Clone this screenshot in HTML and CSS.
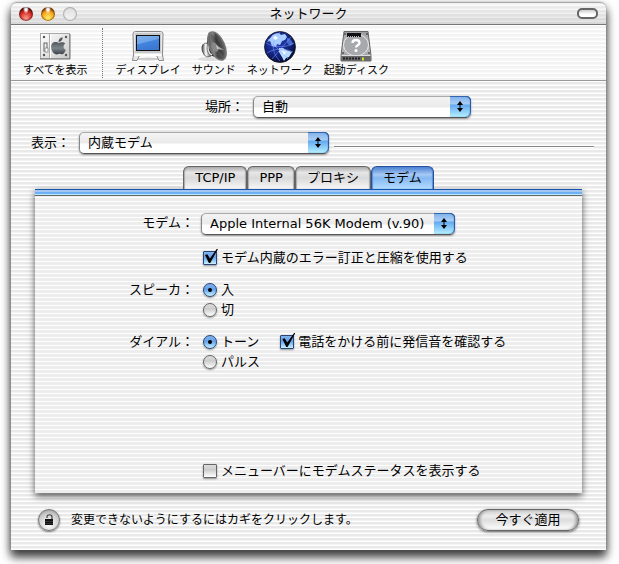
FILE: index.html
```html
<!DOCTYPE html>
<html lang="ja">
<head>
<meta charset="utf-8">
<meta name="viewport" content="width=device-width, initial-scale=1">
<title>ネットワーク</title>
<link rel="stylesheet" href="styles.css">
</head>
<body>
<main class="window">
  <header class="titlebar">
    <div class="lights">
      <button class="light red" aria-label="閉じる"></button>
      <button class="light amber" aria-label="しまう"></button>
      <button class="light clear" aria-label="拡大"></button>
    </div>
    <h1>ネットワーク</h1>
    <button class="pill" aria-label="ツールバー"></button>
  </header>

  <nav class="toolbar">
    <button class="tool">
      <svg width="32" height="32" viewBox="0 0 32 32">
        <defs><linearGradient id="plate" x2="1" y2="1"><stop stop-color="#fff"/><stop offset="1" stop-color="#c9c9c9"/></linearGradient>
        <linearGradient id="apple" x2="0" y2="1"><stop stop-color="#50585e"/><stop offset=".5" stop-color="#7c858b"/><stop offset="1" stop-color="#394147"/></linearGradient></defs>
        <rect x="1.500" y="2.500" width="29" height="25" fill="url(#plate)" stroke="#a8a8a8"/>
        <path d="M1 28h30V3" fill="none" stroke="#777"/>
        <path d="M10.500 3v24" stroke="#aaa"/><path d="M11.500 3v24" stroke="#fff"/>
        <rect x="5" y="12" width="3" height="8" fill="#eee" stroke="#666"/><rect x="6" y="17" width="3" height="4" fill="#fff" stroke="#777" stroke-width=".7"/>
        <g fill="#555"><circle cx="5" cy="6" r="1.200"/><circle cx="5" cy="24" r="1.200"/><circle cx="27" cy="6" r="1.200"/><circle cx="27" cy="24" r="1.200"/></g>
        <path d="M16 11c2-.5 3.500 1 5 .6 2-.8 4-.6 5.300 1-2.500 1.800-2.200 5 .5 6.500-1 2.700-2.500 4.400-4 4.200-1.300-.2-2-.7-3.200-.3-2.500 1-4.600.3-6.300-2.700-2.200-4.200-1.300-9 2.700-9.300z" fill="url(#apple)"/>
        <path d="M19.500 11c0-2.700 1.500-4.400 4.200-4.800 0 2.600-1.500 4.600-4.200 4.800z" fill="#4c555a"/>
      </svg>
      <span>すべてを表示</span>
    </button>
    <span class="divider"></span>
    <button class="tool">
      <svg width="32" height="32" viewBox="0 0 32 32">
        <defs><linearGradient id="screen" x2=".4" y2="1"><stop stop-color="#86b4ec"/><stop offset=".5" stop-color="#6ba4ea"/><stop offset=".55" stop-color="#4385de"/><stop offset="1" stop-color="#3b78d2"/></linearGradient></defs>
        <ellipse cx="16" cy="28" rx="12" ry="1.500" fill="#ccc"/>
        <path d="M3.500.5h25c1.500 0 2.500 1 2.500 2.500l-.5 21 1 5.500h-4.500l-2.500-5h-17l-2.500 5H.5l1-5.500L1 3C1 1.500 2 .5 3.500.5z" fill="#e8e8e8" stroke="#888"/>
        <path d="M3 2h26v20H3z" fill="#c7c8ca"/><path d="M2.500 24h27" stroke="#fff" stroke-width="2"/>
        <rect x="4.500" y="4.500" width="23" height="15" fill="url(#screen)" stroke="#111"/>
      </svg>
      <span>ディスプレイ</span>
    </button>
    <button class="tool">
      <svg width="32" height="32" viewBox="0 0 32 32">
        <defs><linearGradient id="cone" x2="1" y2=".7"><stop stop-color="#333"/><stop offset=".4" stop-color="#888"/><stop offset=".55" stop-color="#444"/><stop offset="1" stop-color="#6a6a6a"/></linearGradient>
        <linearGradient id="magnet"><stop stop-color="#666"/><stop offset=".4" stop-color="#fff"/><stop offset="1" stop-color="#555"/></linearGradient></defs>
        <ellipse cx="12" cy="28" rx="12" ry="2" fill="#ddd"/>
        <path d="M11 1 8 15l-3-2c-3 3-1 11 4 13l5-1 12 4z" fill="#333"/>
        <path d="M7 12c-4 2-3 12 2 14l4-1c-4-3-5-8-3-12z" fill="url(#magnet)" stroke="#666" stroke-width=".7"/>
        <path d="M11 13c-2 4-1 9 3 11" fill="none" stroke="#ddd" stroke-width="1.500"/>
        <ellipse cx="19" cy="15" rx="7.500" ry="15" transform="rotate(-24 19 15)" fill="url(#cone)" stroke="#777" stroke-width="1.500"/>
        <path d="M13 3c6 3 13 13 13 22-6-5-14-13-13-22z" fill="#222" opacity=".3"/>
        <ellipse cx="17" cy="16" rx="3" ry="5" transform="rotate(-26 17 16)" fill="#888"/><path d="m18 14 8 5-7-1z" fill="#ddd" opacity=".7"/>
      </svg>
      <span>サウンド</span>
    </button>
    <button class="tool">
      <svg width="32" height="32" viewBox="0 0 32 32">
        <defs><radialGradient id="globe" cx=".4" cy=".35" r=".7"><stop stop-color="#2944c0"/><stop offset=".6" stop-color="#12237f"/><stop offset="1" stop-color="#040828"/></radialGradient></defs>
        <circle cx="16" cy="16" r="15.500" fill="url(#globe)" stroke="#111" stroke-width=".7"/>
        <path d="M7 6c2-3 5-4 8-4l2 2 4-1 2 3-2 3-3 1-2 4-3-1-1 3-4-1-2-5-3 1z" fill="#a9ceff"/>
        <path d="m15 17 4 0 3 2 6 2-3 5-3 1-2 3-2-4-3-5z" fill="#b9dbff"/>
        <path d="M23 7c3 0 5 3 6 6l-3 2-3-3z" fill="#4568cf"/>
        <g fill="none" stroke="#86a7ff" stroke-width=".5"><path d="M2 12c8 5 19 5 28 0M3 22c8-5 18-5 26-1M16 1c-9 9-9 20 0 29M4 8l20 20M27 6 8 28"/></g>
        <path d="m9 6 3-1 2 2-3 2zM18 20l4 1-2 3z" fill="#fff"/>
      </svg>
      <span>ネットワーク</span>
    </button>
    <button class="tool">
      <svg width="32" height="32" viewBox="0 0 32 32">
        <defs><linearGradient id="drive" x2="0" y2="1"><stop stop-color="#9b9b9f"/><stop offset=".5" stop-color="#c6c6c9"/><stop offset="1" stop-color="#8d8d90"/></linearGradient></defs>
        <path d="M4 .5h24l3 24v5.500H1v-5.500z" fill="url(#drive)" stroke="#666"/>
        <ellipse cx="16" cy="14" rx="12.500" ry="11" fill="#a8a9ad" stroke="#e8e8e8"/>
        <rect x="7" y="2" width="14" height="4" fill="#111"/><path d="M8 5.500h12" stroke="#bbb" stroke-dasharray="1 1"/>
        <path d="M1.500 24.500h29v5.500h-29z" fill="#69696c"/><path d="M1.500 24.500h29" stroke="#ddd"/>
        <path d="M3 27.500h17" stroke="#222" stroke-width="2" stroke-dasharray="2 1"/><path d="M23 26.500v3" stroke="#d5e020" stroke-width="2"/>
        <path d="M12.500 12c0-4 7-4 7 0 0 2.500-3.500 2-3.500 4.500" fill="none" stroke="#fff" stroke-width="2.300"/><circle cx="16" cy="19.500" r="1.500" fill="#fff"/>
        <g fill="#555"><circle cx="5" cy="3" r="1"/><circle cx="27" cy="3" r="1"/><circle cx="3" cy="22" r="1"/><circle cx="29" cy="22" r="1"/></g>
      </svg>
      <span>起動ディスク</span>
    </button>
  </nav>

  <div class="field location">
    <label for="location">場所：</label>
    <span class="popup"><select id="location"><option>自動</option></select><svg class="arrows" viewBox="0 0 6 11"><path d="M3 0 6 4H0zM0 7h6L3 11zM2.500 3h1v5h-1z"/></svg></span>
  </div>
  <div class="field show">
    <label for="show">表示：</label>
    <span class="popup"><select id="show"><option>内蔵モデム</option></select><svg class="arrows" viewBox="0 0 6 11"><path d="M3 0 6 4H0zM0 7h6L3 11zM2.500 3h1v5h-1z"/></svg></span>
    <hr>
  </div>

  <div class="tabs" role="tablist">
    <button class="tab" role="tab">TCP/IP</button>
    <button class="tab" role="tab">PPP</button>
    <button class="tab" role="tab">プロキシ</button>
    <button class="tab active" role="tab" aria-selected="true">モデム</button>
  </div>
  <section class="panel" role="tabpanel">
    <div class="row">
      <label class="name" for="modem">モデム：</label>
      <span class="popup modem"><select id="modem"><option>Apple Internal 56K Modem (v.90)</option></select><svg class="arrows" viewBox="0 0 6 11"><path d="M3 0 6 4H0zM0 7h6L3 11zM2.500 3h1v5h-1z"/></svg></span>
    </div>
    <div class="row error">
      <label class="choice"><input type="checkbox" checked>モデム内蔵のエラー訂正と圧縮を使用する</label>
    </div>
    <div class="row group">
      <span class="name">スピーカ：</span>
      <div class="choices">
        <label class="choice"><input type="radio" name="speaker" checked>入</label>
        <label class="choice"><input type="radio" name="speaker">切</label>
      </div>
    </div>
    <div class="row group">
      <span class="name">ダイアル：</span>
      <div class="choices">
        <div class="pair">
          <label class="choice"><input type="radio" name="dial" checked>トーン</label>
          <label class="choice"><input type="checkbox" checked>電話をかける前に発信音を確認する</label>
        </div>
        <label class="choice"><input type="radio" name="dial">パルス</label>
      </div>
    </div>
    <div class="row status">
      <label class="choice"><input type="checkbox">メニューバーにモデムステータスを表示する</label>
    </div>
  </section>

  <footer class="footer">
    <button class="lock" aria-label="カギ">
      <svg width="10" height="12" viewBox="0 0 10 12"><path d="M3 4V3c0-3 5-3 5 0v3" fill="none" stroke="#444" stroke-width="1.200"/><path d="M1 5h8v6H1z" fill="#111"/><path d="M1 7.500h8M1 9.500h8" stroke="#555" stroke-width=".5"/></svg>
    </button>
    <p>変更できないようにするにはカギをクリックします。</p>
    <button class="apply">今すぐ適用</button>
  </footer>
</main>
</body>
</html>
```

FILE: styles.css
```css
* { box-sizing: border-box; }

body {
  margin: 0;
  padding: 2px 13px 15px 11px;
  background: #fff;
  color: #000;
  overflow: hidden;
  font: 13px/20px "DejaVu Sans", "Noto Sans CJK JP", sans-serif;
}

button, select, input { margin: 0; padding: 0; font: inherit; color: inherit; }
button { border: 0; background: none; }

.window {
  border-radius: 6px 6px 0 0;
  background: repeating-linear-gradient(#e9e9e9 0 2px, #f4f4f4 2px 3px, #fff 3px 4px);
  box-shadow: 0 0 1px #777, 0 4px 10px rgba(0, 0, 0, .6), 0 8px 10px rgba(0, 0, 0, .5);
}

.titlebar {
  display: grid;
  grid-template-columns: 1fr auto 1fr;
  align-items: center;
  height: 23px;
  padding: 0 8px;
  border-top: 1px solid #aaa;
  border-bottom: 1px solid #777;
  border-radius: 6px 6px 0 0;
  background: linear-gradient(rgba(255, 255, 255, .3), rgba(190, 190, 190, .45));
}
.titlebar h1 { margin: 0; font-size: 13px; font-weight: 400; line-height: 18px; }
.lights { display: flex; gap: 8px; }
.light { width: 14px; height: 14px; border-radius: 50%; }
.red {
  background: radial-gradient(ellipse at 50% 10%, #fff 0 12%, transparent 30%), radial-gradient(circle at 50% 80%, #ff9b8b, #d32a24 50%, #5a0d0d 75%);
  box-shadow: inset 0 0 1px 1px rgba(70, 20, 20, .6);
}
.amber {
  background: radial-gradient(ellipse at 50% 10%, #fff 0 12%, transparent 30%), radial-gradient(circle at 50% 80%, #fff36c, #f7a31b 50%, #7a3a05 75%);
  box-shadow: inset 0 0 1px 1px rgba(110, 50, 0, .6);
}
.clear {
  background: linear-gradient(#ddd, #f6f6f6);
  box-shadow: inset 0 0 1px 1px #aaa;
}
.pill {
  justify-self: end;
  width: 21px;
  height: 11px;
  border: 2px solid #666;
  border-radius: 5px;
  background: linear-gradient(#ccc, #fff 60%);
}

.toolbar {
  display: flex;
  gap: 11px;
  height: 56px;
  padding: 6px 12px 0;
  border-bottom: 1px solid #999;
  background: rgba(255, 255, 255, .45);
}
.tool { display: flex; flex-direction: column; align-items: center; min-width: 44px; font-size: 11px; line-height: 16px; }
.tool svg { display: block; }
.divider { height: 50px; margin: -3px 2px 0 3px; border-left: 1px dotted #777; }

.field { display: flex; align-items: center; }
.location { gap: 9px; padding: 15px 135px 0 194px; }
.location .popup { flex: 1; }
.show { gap: 9px; padding: 14px 12px 0 20px; }
.show .popup { width: 250px; }
.show hr { flex: 1; height: 2px; margin: 8px 0 0 -4px; border: 0; border-top: 1px solid #888; border-bottom: 1px solid #fff; }

.popup { position: relative; display: block; height: 22px; }
.popup select {
  display: block;
  width: 100%;
  height: 22px;
  padding: 0 22px 1px 8px;
  appearance: none;
  border: 1px solid #888;
  border-top-color: #aaa;
  border-bottom-color: #555;
  border-radius: 5px;
  background: linear-gradient(#f4f4f4, #eaeaea 50%, #fff 55%);
  box-shadow: 0 1px 2px rgba(0, 0, 0, .4);
}
.popup::after {
  content: "";
  position: absolute;
  inset: 0 0 1px auto;
  width: 21px;
  border-radius: 0 5px 5px 0;
  background: linear-gradient(#7eafe8, #a8cdf5 35%, #67abf0 45%, #b5f0ff);
  box-shadow: inset -1px 0 1px #2050a0, inset 0 1px #3468ae;
  pointer-events: none;
}
.arrows { position: absolute; z-index: 1; top: 5px; right: 8px; width: 6px; height: 11px; pointer-events: none; }

.tabs { display: flex; justify-content: center; padding-top: 12px; }
.tab {
  height: 23px;
  padding: 0 11px;
  border: 1px solid #666;
  border-bottom: 0;
  border-radius: 6px 6px 0 0;
  background: linear-gradient(#aaa, #e6e6e6 25%, #d9d9d9 50%, #f8f8f8);
  box-shadow: inset 1px 0 1px #aaa, inset -1px 0 1px #aaa;
  line-height: 22px;
}
.tab.active {
  border-color: #24509c;
  background: linear-gradient(#4c80d2, #a7c9f4 35%, #85b8f2 50%, #b3dcff);
  box-shadow: inset 1px 0 1px #5b8ed6, inset -1px 0 1px #5b8ed6;
}

.panel {
  margin: 0 24px;
  min-height: 304px;
  border-top: 1px solid #1555ae;
  background: linear-gradient(#a5c6f0 0 2px, #6fb0f4 2px 4px, #b8ecff 4px 5px, #666 5px 6px, transparent 6px), repeating-linear-gradient(#ededed 0 3px, #fff 3px 4px);
  box-shadow: 0 3px 7px rgba(0, 0, 0, .65);
  padding-top: 23px;
}
.row { display: grid; grid-template-columns: 159px 1fr; column-gap: 7px; align-items: start; }
.name { text-align: right; }
.popup.modem { width: 254px; }
.choice { display: flex; align-items: center; gap: 4px; width: max-content; }
.row > .choice, .choices { grid-column: 2; padding-left: 2px; }
.error { padding-top: 13px; }
.group { padding-top: 12px; }
.pair { display: flex; gap: 21px; }
.status { padding-top: 89px; }

input { position: relative; display: block; flex: none; width: 14px; height: 14px; appearance: none; border: 1px solid #666; background: linear-gradient(#ddd, #ccc 40%, #fff); box-shadow: 0 1px 2px rgba(0, 0, 0, .4); }
input[type="checkbox"] { border-radius: 1px; }
input[type="radio"] { border-radius: 50%; }
input:checked { border-color: #294477; background: linear-gradient(#83b2ed, #64a2eb 45%, #c6f2ff); }
input[type="radio"]:checked::before { content: ""; position: absolute; inset: 4px; border-radius: 50%; background: #000; }
input[type="checkbox"]:checked::before {
  content: "";
  position: absolute;
  left: 1px;
  top: -3px;
  width: 13px;
  height: 14px;
  background: #000;
  clip-path: polygon(0 42%, 18% 38%, 38% 68%, 90% 0, 100% 0, 40% 100%, 30% 100%);
}

.footer { display: flex; align-items: center; height: 57px; padding: 0 27px 4px; }
.footer p { margin: 0 auto 0 11px; font-size: 12px; }
.lock {
  display: grid;
  place-items: center;
  width: 22px;
  height: 22px;
  border: 1px solid #777;
  border-radius: 50%;
  background: radial-gradient(circle at 50% 70%, #fff, #ccc 60%, #888);
  box-shadow: 0 1px 2px rgba(0, 0, 0, .5);
}
.apply {
  width: 102px;
  height: 22px;
  border: 1px solid #666;
  border-radius: 11px;
  background: linear-gradient(#ccc, #eee 30%, #ddd 50%, #fff);
  box-shadow: inset 3px 0 3px -1px #999, inset -3px 0 3px -1px #999, 0 1px 3px rgba(0, 0, 0, .6);
  line-height: 18px;
}
```
